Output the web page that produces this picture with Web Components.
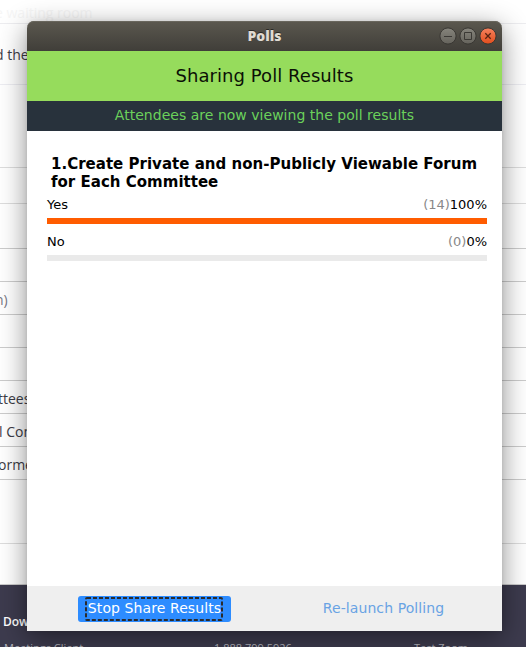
<!DOCTYPE html>
<html lang="en"><head><meta charset="utf-8"><title>Polls</title>
<style>html,body{margin:0;height:647px;overflow:hidden;background:#fff}</style></head>
<body><polls-desktop></polls-desktop>
<script>
const define = (name, html) => customElements.define(name, class extends HTMLElement {
  constructor() {
    super();
    const t = document.createElement('template');
    t.innerHTML = html;
    this.attachShadow({mode: 'open'}).append(t.content.cloneNode(true));
  }
  connectedCallback() {
    for (const a of this.attributes)
      if (a.name.startsWith('v-')) this.style.setProperty('--' + a.name.slice(2), a.value);
  }
});

define('page-row', `<style>
:host{display:flex;align-items:flex-start;box-sizing:border-box;height:var(--h);padding:var(--t,0) 0 0;border-bottom:1px solid var(--line,#ccc);
font:14px/20px "Open Sans",sans-serif;color:var(--ink,#3c3c46);white-space:nowrap;overflow:hidden}
span{margin-left:var(--x,0)}
</style><span><slot></slot></span>`);

define('page-footer', `<style>
:host{display:block;height:62px;background:#3d3b4e;overflow:hidden;font:11px/15px "Open Sans",sans-serif;color:#b5b5bd}
h4{margin:0;padding:27px 0 0 3px;font:600 12px/20px "Open Sans",sans-serif;color:#fff}
div{display:grid;grid-template-columns:210px 200px 1fr;padding:8px 0 0 4px;white-space:nowrap}
</style><h4>Download</h4><div><span>Meetings Client</span><span>1.888.799.5926</span><span>Test Zoom</span></div>`);

define('window-button', `<style>
:host{display:block;width:18px;height:18px}svg{display:block}
</style><svg width="18" height="18" viewBox="0 0 18 18"><defs><linearGradient id="g" x2="0" y2="1"><stop style="stop-color:var(--top,#86847c)"/><stop offset="1" style="stop-color:var(--bottom,#65635c)"/></linearGradient></defs>
<circle cx="9" cy="9" r="8.1" fill="url(#g)" stroke="#393733" stroke-width="1"/></svg><slot></slot>`);

define('window-icon', `<style>:host{display:block;margin-top:-18px}svg{display:block;fill:none;stroke:#3b3935}
path{display:none}:host([kind=min]) .min,:host([kind=max]) .max,:host([kind=close]) .close{display:block}.close{stroke:#5a2311;stroke-width:1.3}</style>
<svg width="18" height="18" viewBox="0 0 18 18"><path class="min" d="M5 9.5h8"/><path class="max" d="M5.5 5.5h7v7h-7z"/><path class="close" d="M6.3 6.3l5.4 5.4M11.7 6.3l-5.4 5.4"/></svg>`);

define('title-bar', `<style>
:host{display:grid;grid-template-columns:1fr auto 1fr;align-items:center;height:30px;box-sizing:border-box;border-radius:7px 7px 0 0;
background:linear-gradient(#5b584f,#403e39);box-shadow:inset 0 1px #69665d;color:#dfdbd2;font:bold 14px/20px "Open Sans",sans-serif}
b{grid-column:2;text-shadow:0 -1px #292824}
div{display:flex;gap:2px;justify-content:flex-end;padding-right:5px}
</style><b><slot></slot></b><div><window-button><window-icon kind="min"></window-icon></window-button><window-button><window-icon kind="max"></window-icon></window-button><window-button v-top="#f6825e" v-bottom="#e24d1c"><window-icon kind="close"></window-icon></window-button></div>`);

define('poll-option', `<style>
:host{display:block;height:37px;font:13px/17px "DejaVu Sans",sans-serif;color:#000}
.l{display:flex;height:22px;align-items:flex-start}.n{flex:1}.c{color:#888}
.b{height:6px;background:#eaeaea}.f{height:6px;width:var(--fill);background:#ff5c00}
</style><div class="l"><span class="n"><slot name="name"></slot></span><span class="c"><slot name="count"></slot></span><span><slot name="pct"></slot></span></div><div class="b"><div class="f"></div></div>`);

define('poll-button', `<style>
:host{display:flex;justify-content:center;font:14px/20px "DejaVu Sans",sans-serif;color:#69a3e4;white-space:nowrap}
button{all:unset;box-sizing:border-box;width:153px;height:26px;display:grid;grid-template-columns:100%;align-items:center;letter-spacing:.09px}
button>*{grid-area:1/1}
span{justify-self:center;padding-bottom:2px}
svg{display:none}
:host([primary]) button{background:#2d8cff;color:#fff;border-radius:3px}
:host([primary]) svg{display:block;margin-left:7px}
</style><button><span><slot></slot></span><svg width="138" height="24"><rect x="1" y="1" width="136" height="22" rx="1" fill="none" stroke="#2b2b2b" stroke-width="2" stroke-dasharray="4 2"/></svg></button>`);

define('poll-window', `<style>
:host{display:flex;flex-direction:column;width:475px;height:610px;border-radius:7px 7px 0 0;background:#fff;font-family:"DejaVu Sans",sans-serif;
box-shadow:0 7px 28px rgba(0,0,0,.45),0 0 4px rgba(0,0,0,.08)}
.h{height:50px;background:#96dc5c;font-size:18px;line-height:49px;text-align:center;color:#0b1006;letter-spacing:.05px}
.s{height:30px;background:#28323c;color:#6bd15b;font-size:14px;line-height:28px;text-align:center;letter-spacing:.02px}
main{flex:1;padding:24px 15px 0 20px}
h3{margin:0 0 5px 4px;font-size:15px;line-height:18px;color:#000;letter-spacing:.015px}
footer{height:45px;background:#efefef;display:grid;grid-template-columns:153px 153px;column-gap:76px;align-items:center;padding-left:51px}
</style><title-bar>Polls</title-bar><div class="h">Sharing Poll Results</div><div class="s">Attendees are now viewing the poll results</div>
<main><h3>1.Create Private and non-Publicly Viewable Forum<br>for Each Committee</h3>
<poll-option v-fill="100%"><span slot="name">Yes</span><span slot="count">(14)</span><span slot="pct">100%</span></poll-option>
<poll-option v-fill="0%"><span slot="name">No</span><span slot="count">(0)</span><span slot="pct">0%</span></poll-option></main>
<footer><poll-button primary>Stop Share Results</poll-button><poll-button>Re-launch Polling</poll-button></footer>`);

define('polls-desktop', `<style>
:host{display:block;position:relative;width:526px;height:647px;overflow:hidden;background:#fff}
poll-window{position:absolute;left:27px;top:21px}
</style>
<page-row v-h="24px" v-t="3px" v-line="#ededf0" v-ink="#f6f6f6" v-x="-5px">e waiting room</page-row>
<page-row v-h="61px" v-t="21px" v-line="#ededf2" v-x="-5px">d the</page-row>
<page-row v-h="83px" v-line="#ddd"></page-row><page-row v-h="36px" v-line="#ddd"></page-row><page-row v-h="45px"></page-row>
<page-row v-h="33px"></page-row>
<page-row v-h="33px" v-t="8px" v-ink="#777783" v-x="-5px">n)</page-row>
<page-row v-h="33px"></page-row><page-row v-h="33px"></page-row>
<page-row v-h="33px" v-t="8px" v-x="-2px">ttees</page-row>
<page-row v-h="33px" v-t="8px" v-x="-1px">l Com</page-row>
<page-row v-h="33px" v-t="8px" v-x="-2px">ormer</page-row>
<page-row v-h="64px" v-line="#ddd"></page-row><page-row v-h="41px" v-line="#ccc"></page-row>
<page-footer></page-footer>
<poll-window></poll-window>`);
</script></body></html>
